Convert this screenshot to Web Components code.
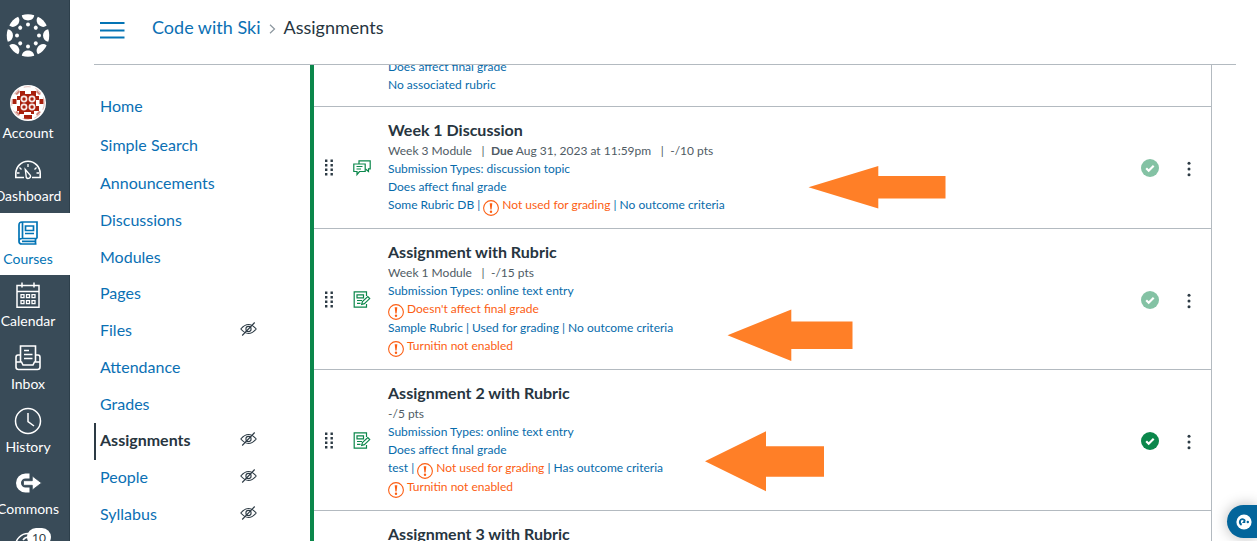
<!DOCTYPE html>
<html lang="en">
<head>
<meta charset="utf-8">
<title>Assignments</title>
<style>
html,body{margin:0;height:100%;overflow:hidden;background:#fff;font-family:Lato,"Liberation Sans",sans-serif;color:#273540}
</style>
</head>
<body>
<course-app></course-app>
<script>
const define = (name, css, html, setup) => {
  const tpl = document.createElement('template');
  tpl.innerHTML = `<style>${css}</style>${typeof html === 'string' ? html : ''}`;
  customElements.define(name, class extends HTMLElement {
    connectedCallback() {
      if (this.shadowRoot) return;
      const root = this.attachShadow({mode: 'open'});
      root.append(tpl.content.cloneNode(true));
      if (typeof html === 'function') root.innerHTML += html(this);
      if (setup) setup(this, root);
    }
  });
};

const petals = [0,45,90,135,180,225,270,315].map(a =>
  `<g transform="rotate(${a})"><path d="M-6.2-20.2Q0-22.400 6.200-20.200C5.500-13.300-5.500-13.300-6.200-20.200Z"/><circle cy="-11" r="2"/></g>`).join('');

const ICONS = {
  logo: [44,44,`<g transform="translate(22 22.5)" fill="currentColor">${petals}</g>`],
  avatar: [36,36,`<circle cx="18" cy="18" r="18" fill="#fff"/><g fill="#a8200d"><path d="M10 6h5v3h6V6h5v5h3v4h-3v6h3v5h-5v3h-3v-2h-7v2H9v-3H7v-5h3v-6H7v-4h3z"/><path d="M2.500 14h4v5h-4zM29.500 14h4v5h-4zM14 30h8v4h-8z"/><path d="M5 9l4-4 1 2-3 3zM31 9l-4-4-1 2 3 3zM5 27l4 4 1-2-3-3zM31 27l-4 4-1-2 3-3z" opacity=".55"/></g><g fill="#a8200d" stroke="#f7e8e5" stroke-width="1.700"><circle cx="14" cy="14" r="2.600"/><circle cx="22" cy="14" r="2.600"/><circle cx="14" cy="22" r="2.600"/><circle cx="22" cy="22" r="2.600"/></g><circle cx="18" cy="18" r="16.300" fill="none" stroke="#d9a29b" stroke-width=".7" stroke-dasharray="7 5"/>`],
  dash: [28,20,`<g fill="none" stroke="currentColor" stroke-width="1.600"><path d="M10 17.500H1.800v-4a12.200 12.200 0 0 1 24.400 0v4H18"/><path d="M14 4v3M5.500 7.500l2 2M22.500 7.500l-2 2M3 13h2.500M22.500 13H25" stroke-width="1.300"/><path d="M11.300 9.500l5 5.800a2.300 2.300 0 0 1-4 2.200z" stroke-width="1.400"/></g>`],
  book: [20,24,`<g fill="none" stroke="currentColor" stroke-width="1.700"><path d="M19 17.500V1H4Q1 1 1 4v16.500Q1 23 4 23h14.500M19 17.500H4Q1 17.500 1 20.500M17.500 17.500V23M4.500 1v16.500M4 20.300h13"/><path d="M7.500 5h8v4.500h-8zM7 12.500h9"/></g>`],
  cal: [24,26,`<g fill="none" stroke="currentColor" stroke-width="1.500"><path d="M1 3.500h22v21.700H1zM1 9.500h22M6 .5v5M18 .5v5"/><path d="M5 12.700h3v3H5zM10.500 12.700h3v3h-3zM16 12.700h3v3h-3zM5 18.700h3v3H5zM10.500 18.700h3v3h-3zM16 18.700h3v3h-3z" stroke-width="1.300"/></g>`],
  inbox: [26,26,`<g fill="none" stroke="currentColor" stroke-width="1.600"><path d="M5.500 17V1h15v16M5.500 10H3Q1 10 1 12.500V22q0 2.500 2.500 2.500h19Q25 24.500 25 22v-9.500Q25 10 23 10h-2.500M1 17h5.500l1.500 3h10l1.500-3H25M9 5.500h5M9 9.500h8.500M9 13.500h8.500"/></g>`],
  clock: [28,28,`<g fill="none" stroke="currentColor" stroke-width="1.500"><circle cx="14" cy="14" r="12.500"/><path d="M14 6v8.500l6 4.500"/></g>`],
  commons: [28,24,`<path d="M15.500 5h-4a7 7 0 0 0 0 14h4" fill="none" stroke="currentColor" stroke-width="5"/><path d="M9.500 9.700H18.300V5L27.500 12 18.300 19V14.300H9.500z" fill="currentColor" stroke="#394b58" stroke-width=".8"/>`],
  help: [28,28,`<g fill="none" stroke="currentColor" stroke-width="1.500"><circle cx="14" cy="14" r="12.500"/><path d="M9 8a7 7 0 0 1 6-3"/></g>`],
  menu: [25,17,`<path d="M0 1h24.500M0 8.500h24.500M0 15.500h24.500" stroke="currentColor" stroke-width="1.800"/>`],
  chev: [7,10,`<path d="M1 .8l4.500 4.200L1 9.200" fill="none" stroke="currentColor" stroke-width="1.200"/>`],
  hidden: [17,14,`<g fill="none" stroke="currentColor" stroke-width="1.100"><path d="M.8 7Q8.500-1.900 16.200 7 8.500 15.900.8 7z"/><circle cx="8.500" cy="7" r="2.600"/><path d="M2.200 13.500L14.700.5"/></g>`],
  grip: [8,17,`<path d="M0 .5h2.400v2.400H0zM5.500.5h2.400v2.400H5.500zM0 5h2.400v2.400H0zM5.500 5h2.400v2.400H5.500zM0 9.500h2.400v2.400H0zM5.500 9.500h2.400v2.400H5.500zM0 14h2.400v2.400H0zM5.500 14h2.400v2.400H5.500z" fill="currentColor"/>`],
  talk: [18,16,`<g fill="none" stroke="currentColor" stroke-width="1.200"><path d="M.8 4h11.400v7.500H6.500L4 14.500v-3H.8z"/><path d="M6 4V.8h11.200v8H15.500v2.700L12.500 9M3.500 6.500h6M3.500 9h4.500"/></g>`],
  assign: [18,17,`<g fill="none" stroke="currentColor" stroke-width="1.200"><path d="M13.500 5V.8H1.200v15.400h12.300V13M4 3.800h6.500v3H4zM4 9.500h5M4 12.300h3.500"/><path d="M8.700 13.300l.7-2.700 5.400-5 1.900 2-5.300 5z"/></g>`],
  check: [18,18,`<circle cx="9" cy="9" r="9" fill="currentColor"/><path d="M5.200 9.300l2.500 2.500 5-5" fill="none" stroke="#fff" stroke-width="2.200"/>`],
  kebab: [4,16,`<g fill="currentColor"><circle cx="2" cy="2.300" r="1.500"/><circle cx="2" cy="8" r="1.500"/><circle cx="2" cy="13.700" r="1.500"/></g>`],
  warn: [16,16,`<circle cx="8" cy="8" r="7.400" fill="none" stroke="currentColor" stroke-width="1.100"/><path d="M6.700 3.300h2.600L8.600 9.500H7.400z" fill="currentColor"/><circle cx="8" cy="11.800" r="1.200" fill="currentColor"/>`],
  ask: [16,16,`<circle cx="8" cy="8" r="7.600" fill="#fff"/><path d="M5.600 10.900Q3.300 9.400 4 7T7.200 5.300 8 8H9.300" fill="none" stroke="#03659b" stroke-width="1.900"/><circle cx="11.800" cy="8" r="1.200" fill="#03659b"/>`]
};

define('ui-icon', ':host{display:inline-block;flex:none;line-height:0}svg{display:block;overflow:visible}', el => {
  const [w,h,body] = ICONS[el.getAttribute('name')];
  return `<svg width="${w}" height="${h}" viewBox="0 0 ${w} ${h}">${body}</svg>`;
});

define('rail-item', `
:host{display:flex;flex-direction:column;align-items:center;height:62.6px;flex:none;color:#fff;font-size:14px;line-height:18px}
:host([active]){background:#fff;color:#0374b5}
:host([tall]){height:72px}
.i{height:36px;display:flex;align-items:center;justify-content:center;margin-top:2px;position:relative}
:host([tall]) .i{margin-top:7px}
.l{margin-top:-1px;white-space:nowrap}
:host([tall]) .l{margin-top:3px}
`, el => `<div class="i"><ui-icon name="${el.getAttribute('icon')}"></ui-icon><slot name="badge"></slot></div><div class="l"><slot></slot></div>`);

define('app-rail', `
:host{display:flex;flex-direction:column;width:84px;margin-left:-14px;height:541px;overflow:hidden;flex:none;background:#394b58;box-shadow:inset -1px 0 #2d3f4b}
.logo{height:78.200px;flex:none;color:#fff;display:flex;justify-content:center;padding-top:13px;box-sizing:border-box}
.badge{position:absolute;left:13px;top:0;min-width:24px;height:18px;border-radius:10px;background:#fff;color:#2d3b45;font-size:12px;line-height:19px;text-align:center}
`, `
<div class="logo"><ui-icon name="logo"></ui-icon></div>
<rail-item icon="avatar" tall>Account</rail-item>
<rail-item icon="dash">Dashboard</rail-item>
<rail-item icon="book" active>Courses</rail-item>
<rail-item icon="cal">Calendar</rail-item>
<rail-item icon="inbox">Inbox</rail-item>
<rail-item icon="clock">History</rail-item>
<rail-item icon="commons">Commons</rail-item>
<rail-item icon="help"><span class="badge" slot="badge">10</span></rail-item>
`);

define('page-header', `
:host{display:flex;align-items:center;height:64px;border-bottom:1px solid #b3bac0;margin:0 21px 0 24px;padding:0 0 0 6px;box-sizing:content-box;font-size:18px;line-height:24px}
.m{color:#0374b5;margin-top:-4px}
.c{display:flex;align-items:center;margin:-10px 0 0 27px}
a{color:#0b70b4}
.s{color:#8b969e;margin:3px 8px 0 8px}
`, `<ui-icon class="m" name="menu"></ui-icon><div class="c"><a>Code with Ski</a><ui-icon class="s" name="chev"></ui-icon><span>Assignments</span></div>`);

define('nav-link', `
:host{display:flex;align-items:center;justify-content:space-between;box-sizing:border-box;height:36.750px;padding:0 53px 2px 6px;font-size:16px;line-height:20px;color:#0b70b4}
:host([active]){font-weight:700;color:#273540;box-shadow:inset 2px 0 #2d3b45}
ui-icon{color:#2d3b45;margin-top:-2px}
`, el => `<span><slot></slot></span>${el.hasAttribute('hidden-item') ? '<ui-icon name="hidden"></ui-icon>' : ''}`);

define('course-nav', `
:host{display:block;width:216px;margin-left:24px;padding-top:23px;box-sizing:border-box;flex:none}
.a{height:38.500px}
.b{height:39.300px}
`, `
<nav-link class="a">Home</nav-link><nav-link class="b">Simple Search</nav-link><nav-link>Announcements</nav-link><nav-link>Discussions</nav-link><nav-link>Modules</nav-link><nav-link>Pages</nav-link><nav-link hidden-item>Files</nav-link><nav-link>Attendance</nav-link><nav-link>Grades</nav-link><nav-link active hidden-item>Assignments</nav-link><nav-link hidden-item>People</nav-link><nav-link hidden-item>Syllabus</nav-link>
`);

define('warn-text', `:host{color:#fc5e13}ui-icon{vertical-align:-4.500px;margin-right:3px;height:14px}`, `<ui-icon name="warn"></ui-icon><slot></slot>`);

define('info-line', `:host{display:block;height:18px;line-height:18px;font-size:12px;color:#076bab;white-space:nowrap}:host([meta]){color:#4f5b64}:host([deep]){height:19px}`, `<slot></slot>`);

define('assignment-row', `
:host{display:flex;align-items:center;box-sizing:border-box;border-bottom:1px solid #b3bac0;flex:none;position:relative;padding-right:20px}
:host::before{content:"";position:absolute;left:-4px;bottom:-1px;width:4px;height:1px;background:#075c3c}
.g{color:#2d3b45;margin-left:11px}
.t{color:#0b874b;margin-left:20px;width:18px}
.d{flex:1;margin-left:17px;padding:11px 0 var(--pad-bottom,14px)}
.h{font-size:16px;font-weight:700;line-height:24px;height:24px}
.k{color:#2d3b45;margin:3px 0 0 28px}
.c{color:#0b874b;margin-top:1px}
:host([dim]) .c{opacity:.5}
`, el => `<ui-icon class="g" name="grip"></ui-icon><ui-icon class="t" name="${el.getAttribute('icon') || 'assign'}"></ui-icon><div class="d"><div class="h">${el.getAttribute('heading')}</div><slot></slot></div><ui-icon class="c" name="check"></ui-icon><ui-icon class="k" name="kebab"></ui-icon>`);

define('assignment-list', `
:host{display:flex;flex-direction:column;width:902px;height:476px;overflow:hidden;box-sizing:border-box;border-left:4px solid #0b874b;border-right:1px solid #b3bac0;flex:none}
.first{margin-top:-78px;--pad-bottom:12px}
b{font-weight:700}
i{font-style:normal;display:inline-block}
.p{margin:0 6.500px 0 9.500px}
`, `
<assignment-row class="first" heading="Syllabus Quiz"><info-line meta>-/5 pts</info-line><info-line>Submission Types: online quiz</info-line><info-line>Does affect final grade</info-line><info-line>No associated rubric</info-line></assignment-row>
<assignment-row dim icon="talk" heading="Week 1 Discussion"><info-line meta>Week 3 Module<i class="p">|</i><b>Due</b> Aug 31, 2023 at 11:59pm<i class="p">|</i>-/10 pts</info-line><info-line>Submission Types: discussion topic</info-line><info-line>Does affect final grade</info-line><info-line>Some Rubric DB | <warn-text>Not used for grading</warn-text> | No outcome criteria</info-line></assignment-row>
<assignment-row dim heading="Assignment with Rubric"><info-line meta>Week 1 Module<i class="p">|</i>-/15 pts</info-line><info-line>Submission Types: online text entry</info-line><info-line deep><warn-text>Doesn't affect final grade</warn-text></info-line><info-line>Sample Rubric | Used for grading | No outcome criteria</info-line><info-line><warn-text>Turnitin not enabled</warn-text></info-line></assignment-row>
<assignment-row heading="Assignment 2 with Rubric"><info-line meta>-/5 pts</info-line><info-line>Submission Types: online text entry</info-line><info-line>Does affect final grade</info-line><info-line deep>test | <warn-text>Not used for grading</warn-text> | Has outcome criteria</info-line><info-line><warn-text>Turnitin not enabled</warn-text></info-line></assignment-row>
<assignment-row heading="Assignment 3 with Rubric"><info-line meta></info-line><info-line></info-line><info-line></info-line><info-line></info-line></assignment-row>
`);

define('callout-arrows', `:host{position:absolute;left:0;top:0;pointer-events:none}svg{display:block}`, `
<svg width="1257" height="541" fill="#ff7f27"><path d="M808.500 187.200L878.300 166v10H945.500v22.500H878.300v10z"/><path d="M727.500 335.300L791.300 309.500v12H852.500v27.500H791.300v12z"/><path d="M705 461.300L766 431.200v15H824v30.500H766v14.500z"/></svg>`);

define('help-tab', `:host{position:absolute;left:1227px;top:505px;width:30px;height:33px;box-sizing:border-box;background:#03659b;border-radius:17px 0 0 17px;display:flex;align-items:center;padding-left:8.500px;box-shadow:0 0 14px rgba(0,0,0,.28)}`, `<ui-icon name="ask"></ui-icon>`);

define('course-app', `
:host{display:flex;width:1257px;height:541px;overflow:hidden;position:relative;background:#fff}
main{flex:1;min-width:0}
.b{display:flex}
`, `<app-rail></app-rail><main><page-header></page-header><div class="b"><course-nav></course-nav><assignment-list></assignment-list></div></main><callout-arrows></callout-arrows><help-tab></help-tab>`);
</script>
</body>
</html>
